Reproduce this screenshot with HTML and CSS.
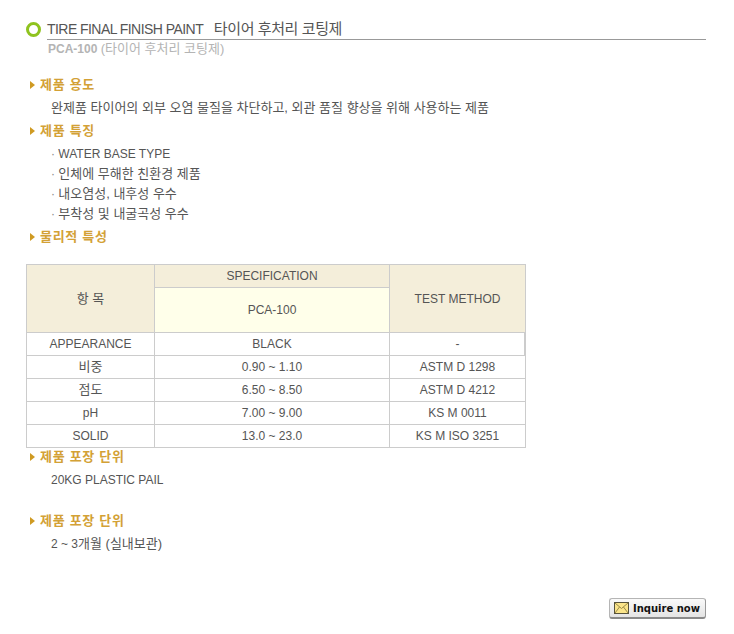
FILE: index.html
```html
<!DOCTYPE html>
<html lang="ko">
<head>
<meta charset="utf-8">
<title>TIRE FINAL FINISH PAINT</title>
<link rel="stylesheet" href="styles.css">
</head>
<body>
<main class="page">
  <header class="head">
    <span class="ring"></span>
    <h1 class="title">TIRE FINAL FINISH PAINT&nbsp; <span class="ko-title">타이어 후처리 코팅제</span></h1>
  </header>
  <p class="sub"><b>PCA-100</b> <span class="ko-sub">(타이어 후처리 코팅제)</span></p>

  <h2 class="sec sec-first">제품 용도</h2>
  <p class="body ko">완제품 타이어의 외부 오염 물질을 차단하고, 외관 품질 향상을 위해 사용하는 제품</p>

  <h2 class="sec sec-feat">제품 특징</h2>
  <ul class="list">
    <li>WATER BASE TYPE</li>
    <li><span class="ko">인체에 무해한 친환경 제품</span></li>
    <li><span class="ko">내오염성, 내후성 우수</span></li>
    <li><span class="ko">부착성 및 내굴곡성 우수</span></li>
  </ul>

  <h2 class="sec sec-phys">물리적 특성</h2>
  <table class="spec">
    <colgroup><col class="c1"><col class="c2"><col class="c3"></colgroup>
    <tr class="r1">
      <th rowspan="2"><span class="ko">항 목</span></th>
      <th>SPECIFICATION</th>
      <th rowspan="2">TEST METHOD</th>
    </tr>
    <tr class="r2"><td class="prod">PCA-100</td></tr>
    <tr><td>APPEARANCE</td><td>BLACK</td><td class="thick">-</td></tr>
    <tr><td><span class="ko">비중</span></td><td>0.90 ~ 1.10</td><td>ASTM D 1298</td></tr>
    <tr><td><span class="ko">점도</span></td><td>6.50 ~ 8.50</td><td>ASTM D 4212</td></tr>
    <tr><td>pH</td><td>7.00 ~ 9.00</td><td>KS M 0011</td></tr>
    <tr><td>SOLID</td><td>13.0 ~ 23.0</td><td>KS M ISO 3251</td></tr>
  </table>

  <h2 class="sec sec-pack">제품 포장 단위</h2>
  <p class="body">20KG PLASTIC PAIL</p>

  <h2 class="sec sec-last">제품 포장 단위</h2>
  <p class="body">2 ~ 3<span class="ko">개월 (실내보관)</span></p>

  <div class="actions">
    <a class="btn" href="#">
      <svg class="mail" width="15" height="12" viewBox="0 0 15 12" aria-hidden="true">
        <rect x="0.5" y="0.5" width="14" height="11" fill="#fbe58a" stroke="#57533c"/>
        <path d="M1 1l6.5 5.500L14 1M1 11l4.500-6M14 11L9.500 5" fill="none" stroke="#9a8a48"/>
      </svg>
      <span>Inquire now</span>
    </a>
  </div>
</main>
</body>
</html>
```
FILE: styles.css
```css
* { box-sizing: border-box; }
html, body { margin: 0; padding: 0; background: #fff; }
body {
  font-family: "Liberation Sans", "Noto Sans CJK KR", sans-serif;
  font-size: 12px;
  color: #555;
}
.page { width: 734px; height: 634px; padding: 20px 28px 0 26px; overflow: hidden; }

.ko { font-size: 13px; line-height: 1; }

.head {
  display: flex;
  align-items: center;
  gap: 6px;
  height: 20px;
  position: relative;
}
.head::after {
  content: "";
  position: absolute;
  left: 21px; right: 0; top: 19px;
  height: 1px;
  background: #999;
}
.ring {
  width: 15px; height: 15px;
  border: 3.5px solid #8fc31f;
  border-radius: 50%;
  flex: none;
  margin-top: -2px;
}
.title {
  margin: -1px 0 0;
  font-size: 14px;
  font-weight: 400;
  line-height: 17px;
  letter-spacing: -0.55px;
  color: #555;
}
.ko-title { margin-left: 4px; font-size: 15px; line-height: 1; letter-spacing: -0.4px; }
.sub {
  margin: 1px 0 0 22px;
  font-size: 12px;
  line-height: 16px;
  color: #b4b4b4;
}
.sub b { font-weight: 700; }
.ko-sub { font-size: 13px; line-height: 1; }

.sec {
  margin: 0 0 0 4px;
  padding-left: 10px;
  font-size: 13px;
  font-weight: 700;
  line-height: 16px;
  letter-spacing: 0.7px;
  color: #d3a136;
  position: relative;
}
.sec::before {
  content: "";
  position: absolute;
  left: 0; top: 4px;
  border-left: 5px solid #cf9a22;
  border-top: 4px solid transparent;
  border-bottom: 4px solid transparent;
}
.sec-first { margin-top: 20px; }
.sec-feat { margin-top: 7px; }
.sec-phys { margin-top: 5px; }
.sec-pack { margin-top: 1px; }
.sec-last { margin-top: 25px; }

.body { margin: 7px 0 0 25px; line-height: 16px; color: #555; }
.body.ko { font-size: 13px; line-height: 16px; }

.list { margin: 5px 0 0 25px; padding: 0; list-style: none; }
.list li { line-height: 20px; }
.list li::before { content: "· "; color: #888; }

.spec {
  margin-top: 19px;
  border-collapse: collapse;
  table-layout: fixed;
  width: 499px;
  font-size: 12px;
  color: #555;
}
.c1 { width: 128px; }
.c2 { width: 235px; }
.c3 { width: 136px; }
.spec th, .spec td {
  border: 1px solid #ccc;
  padding: 0;
  height: 23px;
  text-align: center;
  font-weight: 400;
}
.spec th { background: #f4eeda; }
.spec .r2 td { height: 45px; }
.spec .prod { background: #ffffea; }
.spec .thick { box-shadow: inset -1px 0 0 #ccc; }

.actions { display: flex; justify-content: flex-end; margin-top: 46px; }
.btn {
  display: flex;
  align-items: center;
  gap: 4px;
  width: 97px; height: 21px;
  padding-left: 4px;
  border: 1px solid #b5b5b5;
  border-bottom: 2px solid #8a8a8a;
  border-right-color: #999;
  border-radius: 3px;
  background: linear-gradient(#fafafa, #e4e4e4);
  color: #111;
  font-family: "DejaVu Sans", sans-serif;
  font-size: 10px;
  font-weight: 700;
  text-decoration: none;
}
.mail { flex: none; }
```
